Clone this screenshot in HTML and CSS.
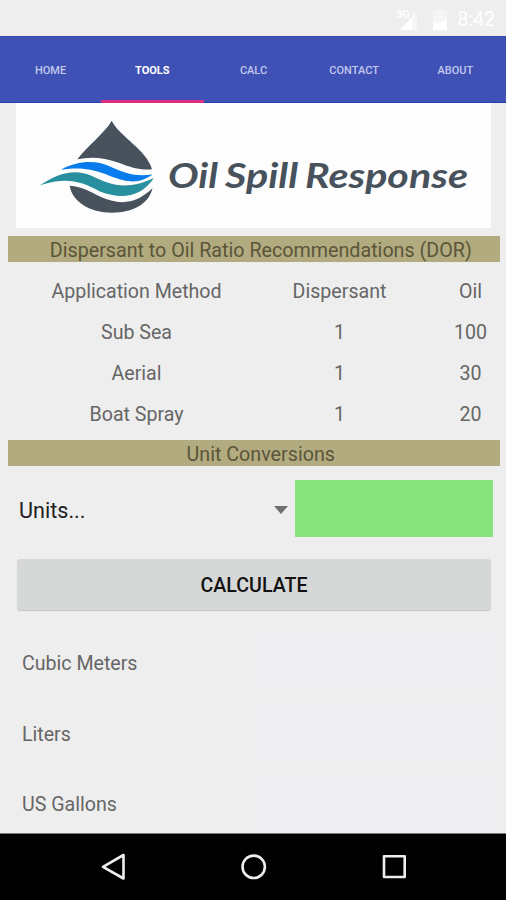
FILE: index.html
```html
<!DOCTYPE html>
<html lang="en">
<head>
<meta charset="utf-8">
<title>Oil Spill Response</title>
<link rel="stylesheet" href="styles.css">
</head>
<body>
<header class="status">
  <svg class="status-icons" viewBox="0 0 56 24" width="56" height="24">
    <path d="M20 6v17H4z" fill="#fff"/>
    <path d="M16 6h5v17h-5z" fill="#f6f6f6"/>
    <path d="M37 4h4V2h6v2h4v19H37z" fill="#f5f5f5"/>
    <path d="M37 14l5 3 9-5v11H37z" fill="#fff"/>
    <text x="0" y="11" class="network">3G</text>
  </svg>
  <span class="clock">8:42</span>
</header>
<nav class="tabs">
  <a class="tab">HOME</a>
  <a class="tab active">TOOLS</a>
  <a class="tab">CALC</a>
  <a class="tab">CONTACT</a>
  <a class="tab">ABOUT</a>
</nav>
<main class="content">
  <svg class="logo" viewBox="16 103 475 125" width="475" height="125">
    <path d="M111.700 120.700C105 133 87 146 77.300 159.300C91 156.500 104 157.500 118 162.500C131 167.500 141 170.500 152 169.300C147 150 120 137 111.700 120.700Z" fill="#48525c"/>
    <path d="M61 169.700C77 161 95 159.500 110 166.500C126 174 136 176.500 152.500 174.500C139 184 129 183 110 176C91 168 79 167.500 61 169.700Z" fill="#087cec"/>
    <path d="M40 185.300C57 174 74 168 92 176C112 186 128 190 154 178C141 197 122 200 100 191.500C80 181 67 177 40 185.300Z" fill="#278f9d"/>
    <path d="M69.700 185.700C83 187 89 191 99 196C120 206 136 204 152.500 188.300C149 204 133 212.700 112 212.700C89 212.700 72 201 69.700 185.700Z" fill="#48525c"/>
    <g class="brand">
      <text x="168" y="187.500" textLength="50" lengthAdjust="spacingAndGlyphs">Oil</text>
      <text x="225" y="187.500" textLength="73" lengthAdjust="spacingAndGlyphs">Spill</text>
      <text x="305" y="187.500" textLength="163" lengthAdjust="spacingAndGlyphs">Response</text>
    </g>
  </svg>
  <h2 class="banner">Dispersant to Oil Ratio Recommendations (DOR)</h2>
  <div class="ratios">
    <span>Application Method</span><span>Dispersant</span><span>Oil</span>
    <span>Sub Sea</span><span>1</span><span>100</span>
    <span>Aerial</span><span>1</span><span>30</span>
    <span>Boat Spray</span><span>1</span><span>20</span>
  </div>
  <h2 class="banner">Unit Conversions</h2>
  <div class="entry">
    <div class="spinner"><span>Units...</span>
      <svg viewBox="0 0 14 8" width="14" height="8"><path d="M0 0h14L7 8z" fill="#6f6f6f"/></svg>
    </div>
    <div class="amount"></div>
  </div>
  <button class="calculate">CALCULATE</button>
  <div class="results">
    <div class="result"><span>Cubic Meters</span><div class="value"></div></div>
    <div class="result"><span>Liters</span><div class="value"></div></div>
    <div class="result"><span>US Gallons</span><div class="value"></div></div>
  </div>
</main>
<footer class="navbar">
  <svg viewBox="0 0 506 66" width="506" height="66" fill="none" stroke="#eee" stroke-width="2.600" stroke-linejoin="round">
    <path d="M123.500 21v23.500L103 32.800z"/>
    <circle cx="253.700" cy="32.800" r="11.200"/>
    <rect x="384" y="22.300" width="20.700" height="20.700"/>
  </svg>
</footer>
</body>
</html>
```

FILE: styles.css
```css
* { box-sizing: border-box; }

body {
  margin: 0;
  width: 506px;
  height: 900px;
  overflow: hidden;
  display: flex;
  flex-direction: column;
  background: #eeeeee;
  color: #666;
  font-family: Roboto, "Liberation Sans", sans-serif;
  font-size: 19.6px;
}

.status {
  height: 36px;
  flex: none;
  display: flex;
  justify-content: flex-end;
  align-items: center;
  gap: 8px;
  padding: 2px 11px 0 0;
  color: #fff;
}
.status-icons { margin-right: -3px; }
.network { font-size: 11px; font-weight: 500; fill: #fff; }
.clock { font-size: 19.5px; font-weight: 400; }

.tabs {
  height: 67px;
  flex: none;
  display: grid;
  grid-template-columns: 101px 102.5px 100px 1fr 1fr;
  background: #3f51b5;
  border-top: 1px solid #3346ae;
  border-bottom: 1px solid #2340ae;
}
.tab {
  display: flex;
  align-items: center;
  justify-content: center;
  padding-top: 1px;
  font-size: 11px;
  font-weight: 500;
  color: #c3c9ec;
}
.tab.active {
  color: #fff;
  font-weight: 700;
  margin-bottom: -1px;
  border-bottom: 3px solid #dc2f83;
  padding-top: 3px;
}

.content {
  flex: none;
  height: 730px;
  display: flex;
  flex-direction: column;
}
.logo {
  flex: none;
  margin-left: 16px;
  background: #fdfdfd;
}
.brand {
  font-family: Lato, sans-serif;
  font-size: 33.500px;
  font-weight: 700;
  font-style: italic;
  fill: #48525c;
}

.banner {
  flex: none;
  height: 26px;
  margin: 8px 6.5px 0 8px;
  padding-left: 14px;
  background: #b2ab7f;
  color: #5b553a;
  font-size: 19.7px;
  font-weight: 400;
  line-height: 29px;
  text-align: center;
  white-space: nowrap;
}

.ratios {
  flex: none;
  display: grid;
  grid-template-columns: 257px 149px 113px;
  grid-auto-rows: 40.8px;
  align-items: center;
  text-align: center;
  margin: 8.800px 0 -2px 8px;
}
.ratios span { padding-top: 1px; }

.entry {
  flex: none;
  display: flex;
  height: 57px;
  margin: 14px 13px 0 19px;
}
.spinner {
  width: 276px;
  display: flex;
  align-items: center;
  justify-content: space-between;
  padding: 4px 7px 0 0;
  font-size: 21.600px;
  color: #222;
}
.amount { flex: 1; background: #87e37b; }

.calculate {
  flex: none;
  width: 474px;
  height: 51px;
  margin: 22px 0 0 17px;
  padding: 2px 0 0;
  border: 0;
  border-radius: 3px;
  background: #d6d8d7;
  box-shadow: 0 1px 1px #c4c5c5;
  color: #111;
  font: 500 19.600px Roboto, "Liberation Sans", sans-serif;
}

.results {
  display: flex;
  flex-direction: column;
  gap: 14.500px;
  margin: 22px 10px 0 22px;
}
.result {
  flex: none;
  height: 56px;
  display: flex;
  align-items: center;
  justify-content: space-between;
}
.result span { padding-top: 8px; }
.value { width: 240px; height: 56px; background: #efeff3; }

.navbar {
  flex: none;
  height: 67px;
  background: #000;
  border-top: 1px solid #777;
}
.navbar svg { display: block; }
```
